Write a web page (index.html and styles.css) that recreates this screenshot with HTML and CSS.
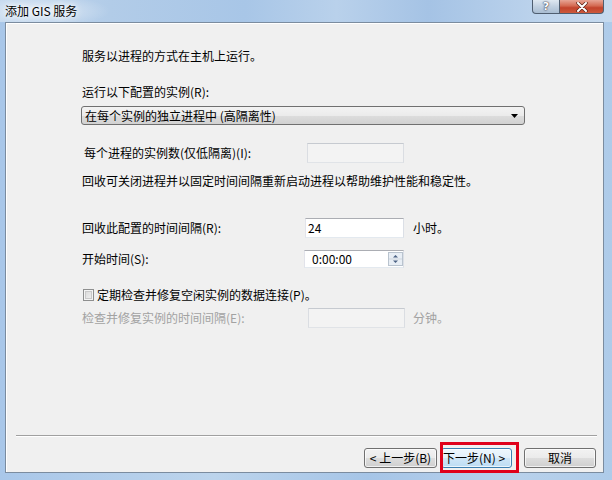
FILE: index.html
```html
<!DOCTYPE html>
<html lang="zh-CN">
<head>
<meta charset="utf-8">
<title>添加 GIS 服务</title>
<link rel="stylesheet" href="styles.css">
</head>
<body>
<div class="window">
  <div class="titlebar">
    <span class="title">添加 GIS 服务</span>
    <div class="caption-btns">
      <span class="cap-btn help">?</span>
      <span class="cap-btn close">
        <svg width="12" height="10" viewBox="0 0 12 10"><path d="M2 1 L10 9 M10 1 L2 9" stroke="#5a2318" stroke-width="3.4" stroke-linecap="round"/><path d="M2 1 L10 9 M10 1 L2 9" stroke="#fff" stroke-width="2" stroke-linecap="round"/></svg>
      </span>
    </div>
  </div>
  <div class="client">
    <div class="content">
      <p class="line l1">服务以进程的方式在主机上运行。</p>
      <p class="line l2">运行以下配置的实例(R):</p>
      <div class="select">
        <span>在每个实例的独立进程中 (高隔离性)</span>
        <svg class="arrow" width="7" height="4" viewBox="0 0 7 4"><path d="M0 0H7L3.5 4Z" fill="#000"/></svg>
      </div>
      <div class="row r3">
        <span class="label">每个进程的实例数(仅低隔离)(I):</span>
        <span class="input disabled"></span>
      </div>
      <p class="line l4">回收可关闭进程并以固定时间间隔重新启动进程以帮助维护性能和稳定性。</p>
      <div class="row r5">
        <span class="label">回收此配置的时间间隔(R):</span>
        <span class="input">24</span>
        <span class="unit">小时。</span>
      </div>
      <div class="row r6">
        <span class="label">开始时间(S):</span>
        <span class="input time">0:00:00
          <svg class="spin" width="15" height="14" viewBox="0 0 15 14"><rect x="0.5" y="0.5" width="14" height="13" fill="#e8eef5" stroke="#b9c3ce"/><line x1="1" y1="7" x2="14" y2="7" stroke="#cfd6de"/><path d="M5 5.5 L7.5 3 L10 5.5Z" fill="#4a6183"/><path d="M5 8.5 L7.5 11 L10 8.5Z" fill="#4a6183"/></svg>
        </span>
      </div>
      <div class="check-row">
        <span class="checkbox"></span>
        <span>定期检查并修复空闲实例的数据连接(P)。</span>
      </div>
      <div class="row r8 dim">
        <span class="label">检查并修复实例的时间间隔(E):</span>
        <span class="input disabled"></span>
        <span class="unit">分钟。</span>
      </div>
    </div>
    <div class="separator"></div>
    <div class="buttons">
      <button class="btn back">&lt; 上一步(B)</button>
      <span class="next-wrap">
        <button class="btn next">下一步(N) &gt;</button>
      </span>
      <button class="btn cancel">取消</button>
    </div>
  </div>
</div>
</body>
</html>
```
FILE: styles.css
```css
* { box-sizing: border-box; margin: 0; padding: 0; }
html, body { width: 612px; height: 480px; overflow: hidden; }
body {
  font-family: "Noto Sans CJK SC", "Noto Sans", sans-serif;
  font-size: 12px;
  color: #000;
  background: #b5cfea;
}
.window {
  width: 612px;
  height: 480px;
  display: flex;
  flex-direction: column;
  background: linear-gradient(to right, #a9c7e9 0%, #bcd4ec 35%, #a6c5e7 60%, #b8d1eb 85%, #aecbe9 100%);
}
.titlebar {
  height: 22px;
  display: flex;
  align-items: flex-start;
  background:
    radial-gradient(ellipse 70px 16px at 40px 11px, rgba(255,255,255,0.55), rgba(255,255,255,0) 100%),
    linear-gradient(to right, #c3d8ee 0%, #b2cce8 18%, #a8c6e7 40%, #b9d1eb 55%, #a5c3e5 70%, #bcd3ec 88%, #c6daee 100%);
}
.title {
  padding: 3px 0 0 5px;
  line-height: 15px;
  color: #000;
  text-shadow: 0 0 5px #fff, 0 0 8px #fff;
}
.caption-btns {
  margin-left: auto;
  margin-right: 8px;
  display: flex;
}
.cap-btn {
  height: 14px;
  border: 1px solid #4f5e70;
  border-top: 0;
  display: flex;
  align-items: center;
  justify-content: center;
}
.help {
  width: 28px;
  border-radius: 0 0 0 4px;
  background: linear-gradient(#dfe8f1, #c1d0e0 50%, #a9bdd2);
  color: #fff;
  font-family: "DejaVu Sans", sans-serif;
  font-weight: bold;
  font-size: 11px;
  line-height: 12px;
  text-shadow: 0 0 2px #334, 0 0 1px #223;
}
.close {
  width: 44px;
  border-left: 0;
  border-radius: 0 0 4px 0;
  background: linear-gradient(#e7a595, #d46a52 45%, #c2432c 60%, #cd5a3c);
}
.client {
  flex: 1;
  margin: 0 8px 7px 5px;
  background: #f0f0f0;
  border: 1px solid #7b8c9f;
  box-shadow: inset 1px 1px 0 #fff;
  display: flex;
  flex-direction: column;
}
.content {
  padding: 25px 0 0 76px;
  line-height: 16px;
}
.line { height: 16px; white-space: nowrap; }
.l2 { margin-top: 20px; }
.l4 { margin-top: 10px; }
.select {
  margin: 6px 0 0 -1px;
  width: 444px;
  height: 19px;
  border: 1px solid #707070;
  border-radius: 3px;
  background: linear-gradient(#f3f3f3 0%, #ebebeb 50%, #dddddd 51%, #d1d1d1 100%);
  display: flex;
  align-items: center;
  padding: 0 3px;
}
.select .arrow { margin-left: auto; margin-right: 3px; }
.row {
  display: flex;
  align-items: center;
  white-space: nowrap;
}
.label { width: 223px; flex: none; }
.input {
  height: 20px;
  width: 99px;
  background: #fff;
  border: 1px solid;
  border-color: #abadb3 #dbdfe6 #e3e9ef #e2e3ea;
  padding-left: 2px;
  display: flex;
  align-items: center;
}
.input.disabled {
  background: #f3f3f3;
  border-color: #c6cad0 #dadde2 #e0e3e7 #dadde2;
}
.unit { margin-left: 9px; }
.r3 { margin-top: 18px; }
.r3 .label { padding-left: 2px; }
.r3 .input { margin-left: 2px; width: 97px; }
.r5 { margin-top: 29px; }
.r6 { margin-top: 12px; }
.r6 .input { margin-left: -1px; width: 100px; height: 18px; padding-left: 7px; }
.spin { margin-left: auto; margin-right: 0; }
.check-row {
  margin-top: 19px;
  height: 16px;
  display: flex;
  align-items: center;
  white-space: nowrap;
}
.checkbox {
  width: 11px;
  height: 12px;
  margin: 0 3px 0 1px;
  border: 1px solid #8e8f8f;
  background: linear-gradient(135deg, #d6d6d6, #f4f4f4);
  box-shadow: inset 0 0 0 1px #f4f4f4, inset 0 0 0 2px #c9c9c9;
}
.r8 { margin-top: 5px; }
.r8 .input { margin-left: 3px; width: 97px; }
.r8 .unit { margin-left: 8px; }
.dim { color: #a2a2a2; }
.separator {
  margin: auto 6px 0 10px;
  height: 2px;
  border-top: 1px solid #a0a0a0;
  border-bottom: 1px solid #fff;
}
.buttons {
  margin-top: 11px;
  padding: 0 7px 4px 0;
  display: flex;
  justify-content: flex-end;
}
.btn {
  height: 20px;
  font-family: inherit;
  font-size: 12px;
  color: #000;
  border: 1px solid #707070;
  border-radius: 3px;
  background: linear-gradient(#f2f2f2 0%, #ebebeb 48%, #dddddd 52%, #cfcfcf 100%);
  box-shadow: inset 0 0 0 1px rgba(255,255,255,0.7);
  line-height: 16px;
  white-space: nowrap;
}
.back { width: 73px; }
.next-wrap { position: relative; margin-left: 4px; display: flex; }
.next {
  width: 71px;
  border-color: #3c7fb1;
  background: linear-gradient(#eef7fd 0%, #e2f0fb 48%, #cfe6f7 52%, #bcdcf3 100%);
  text-align: left;
  padding-left: 1px;
}
.next-wrap::after {
  content: "";
  position: absolute;
  left: -1px;
  right: -7px;
  top: -6px;
  bottom: -5px;
  border: 3px solid #e0001a;
}
.cancel { width: 72px; margin-left: 12px; }
```
